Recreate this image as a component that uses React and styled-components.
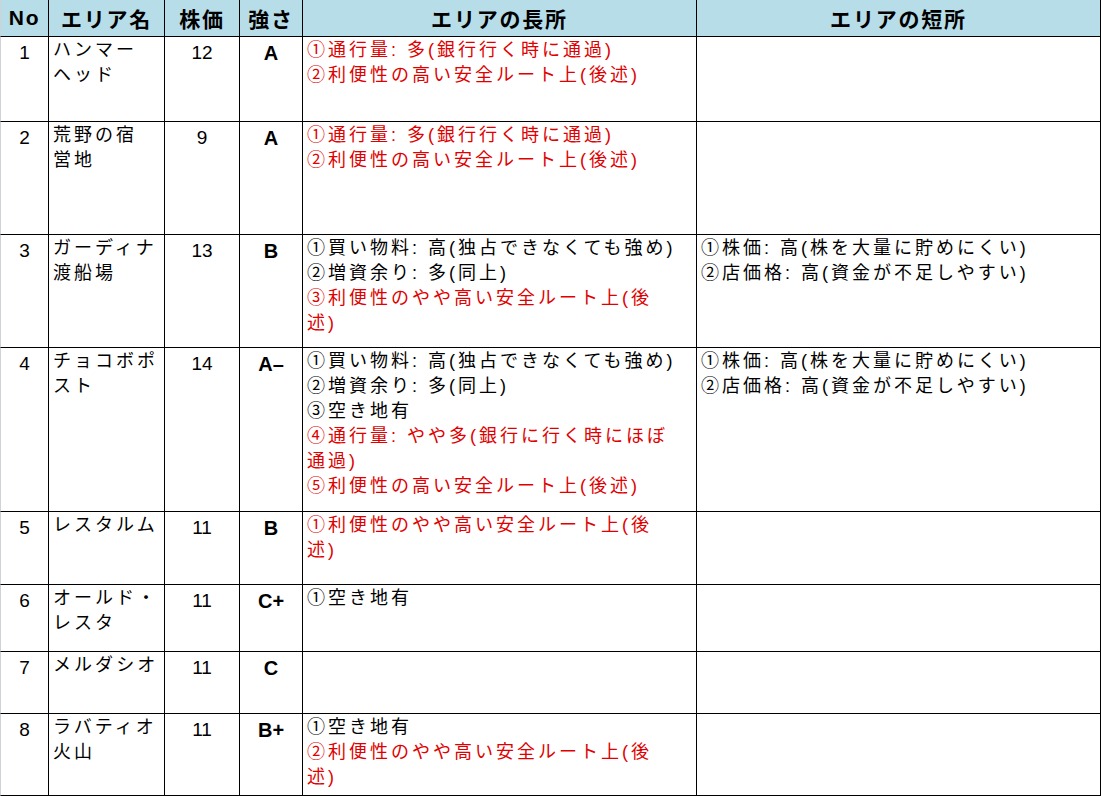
import styled, { createGlobalStyle } from "styled-components"

const GlobalStyle = createGlobalStyle`
  html, body {
    margin: 0;
    padding: 0;
    background: #fff;
    overflow: hidden;
  }
  body {
    font-family: "Liberation Sans", "Noto Sans CJK JP", sans-serif;
    color: #000;
  }
`;

const COLS = "49px 116px 75px 63px 394px 404px";

const Sheet = styled.div`
  width: 1101px;
  display: flex;
  flex-direction: column;
`;

const Row = styled.div`
  display: grid;
  grid-template-columns: ${COLS};
  height: ${(p) => p.$h}px;
  background: ${(p) => (p.$head ? "#b7dde8" : "#fff")};
`;

const Cell = styled.div`
  box-sizing: border-box;
  border-right: 1px solid #000;
  border-bottom: 1px solid #000;
  overflow: hidden;
  &:first-child {
    border-left: 1px solid #cfd3d6;
  }
`;

const HeadCell = styled(Cell)`
  display: flex;
  align-items: center;
  justify-content: center;
  font-size: 21px;
  font-weight: bold;
  letter-spacing: 1.8px;
  padding-bottom: 1px;
`;

const NumCell = styled(Cell)`
  text-align: center;
  font-size: 19px;
  line-height: 25px;
  padding-top: 3px;
`;

const GradeCell = styled(Cell)`
  text-align: center;
  font-size: 20px;
  font-weight: bold;
  line-height: 25px;
  padding-top: 4px;
`;

const TextCell = styled(Cell)`
  padding: 1px 0 0 4px;
  font-size: 18px;
  line-height: 25px;
  letter-spacing: 3px;
`;

const Line = styled.div`
  white-space: nowrap;
  color: ${(p) => (p.$red ? "#e00000" : "#000")};
`;

const rows = [
  {
    no: 1, h: 85, name: ["ハンマー", "ヘッド"], price: 12, grade: "A",
    pros: [
      { red: true, text: "①通行量: 多(銀行行く時に通過)" },
      { red: true, text: "②利便性の高い安全ルート上(後述)" },
    ],
    cons: [],
  },
  {
    no: 2, h: 113, name: ["荒野の宿", "営地"], price: 9, grade: "A",
    pros: [
      { red: true, text: "①通行量: 多(銀行行く時に通過)" },
      { red: true, text: "②利便性の高い安全ルート上(後述)" },
    ],
    cons: [],
  },
  {
    no: 3, h: 113, name: ["ガーディナ", "渡船場"], price: 13, grade: "B",
    pros: [
      { text: "①買い物料: 高(独占できなくても強め)" },
      { text: "②増資余り: 多(同上)" },
      { red: true, text: "③利便性のやや高い安全ルート上(後" },
      { red: true, text: "述)" },
    ],
    cons: [
      { text: "①株価: 高(株を大量に貯めにくい)" },
      { text: "②店価格: 高(資金が不足しやすい)" },
    ],
  },
  {
    no: 4, h: 164, name: ["チョコボポ", "スト"], price: 14, grade: "A–",
    pros: [
      { text: "①買い物料: 高(独占できなくても強め)" },
      { text: "②増資余り: 多(同上)" },
      { text: "③空き地有" },
      { red: true, text: "④通行量: やや多(銀行に行く時にほぼ" },
      { red: true, text: "通過)" },
      { red: true, text: "⑤利便性の高い安全ルート上(後述)" },
    ],
    cons: [
      { text: "①株価: 高(株を大量に貯めにくい)" },
      { text: "②店価格: 高(資金が不足しやすい)" },
    ],
  },
  {
    no: 5, h: 73, name: ["レスタルム"], price: 11, grade: "B",
    pros: [
      { red: true, text: "①利便性のやや高い安全ルート上(後" },
      { red: true, text: "述)" },
    ],
    cons: [],
  },
  {
    no: 6, h: 67, name: ["オールド・", "レスタ"], price: 11, grade: "C+",
    pros: [{ text: "①空き地有" }],
    cons: [],
  },
  {
    no: 7, h: 62, name: ["メルダシオ"], price: 11, grade: "C",
    pros: [],
    cons: [],
  },
  {
    no: 8, h: 82, name: ["ラバティオ", "火山"], price: 11, grade: "B+",
    pros: [
      { text: "①空き地有" },
      { red: true, text: "②利便性のやや高い安全ルート上(後" },
      { red: true, text: "述)" },
    ],
    cons: [],
  },
];

const Lines = ({ items }) =>
  items.map((l, i) => (
    <Line key={i} $red={l.red}>
      {l.text}
    </Line>
  ));

export default function App() {
  return (
    <>
      <GlobalStyle />
      <Sheet>
        <Row $head $h={37}>
          <HeadCell>No</HeadCell>
          <HeadCell>エリア名</HeadCell>
          <HeadCell>株価</HeadCell>
          <HeadCell>強さ</HeadCell>
          <HeadCell>エリアの長所</HeadCell>
          <HeadCell>エリアの短所</HeadCell>
        </Row>
        {rows.map((r) => (
          <Row key={r.no} $h={r.h}>
            <NumCell>{r.no}</NumCell>
            <TextCell>
              <Lines items={r.name.map((t) => ({ text: t }))} />
            </TextCell>
            <NumCell>{r.price}</NumCell>
            <GradeCell>{r.grade}</GradeCell>
            <TextCell>
              <Lines items={r.pros} />
            </TextCell>
            <TextCell>
              <Lines items={r.cons} />
            </TextCell>
          </Row>
        ))}
      </Sheet>
    </>
  );
}
